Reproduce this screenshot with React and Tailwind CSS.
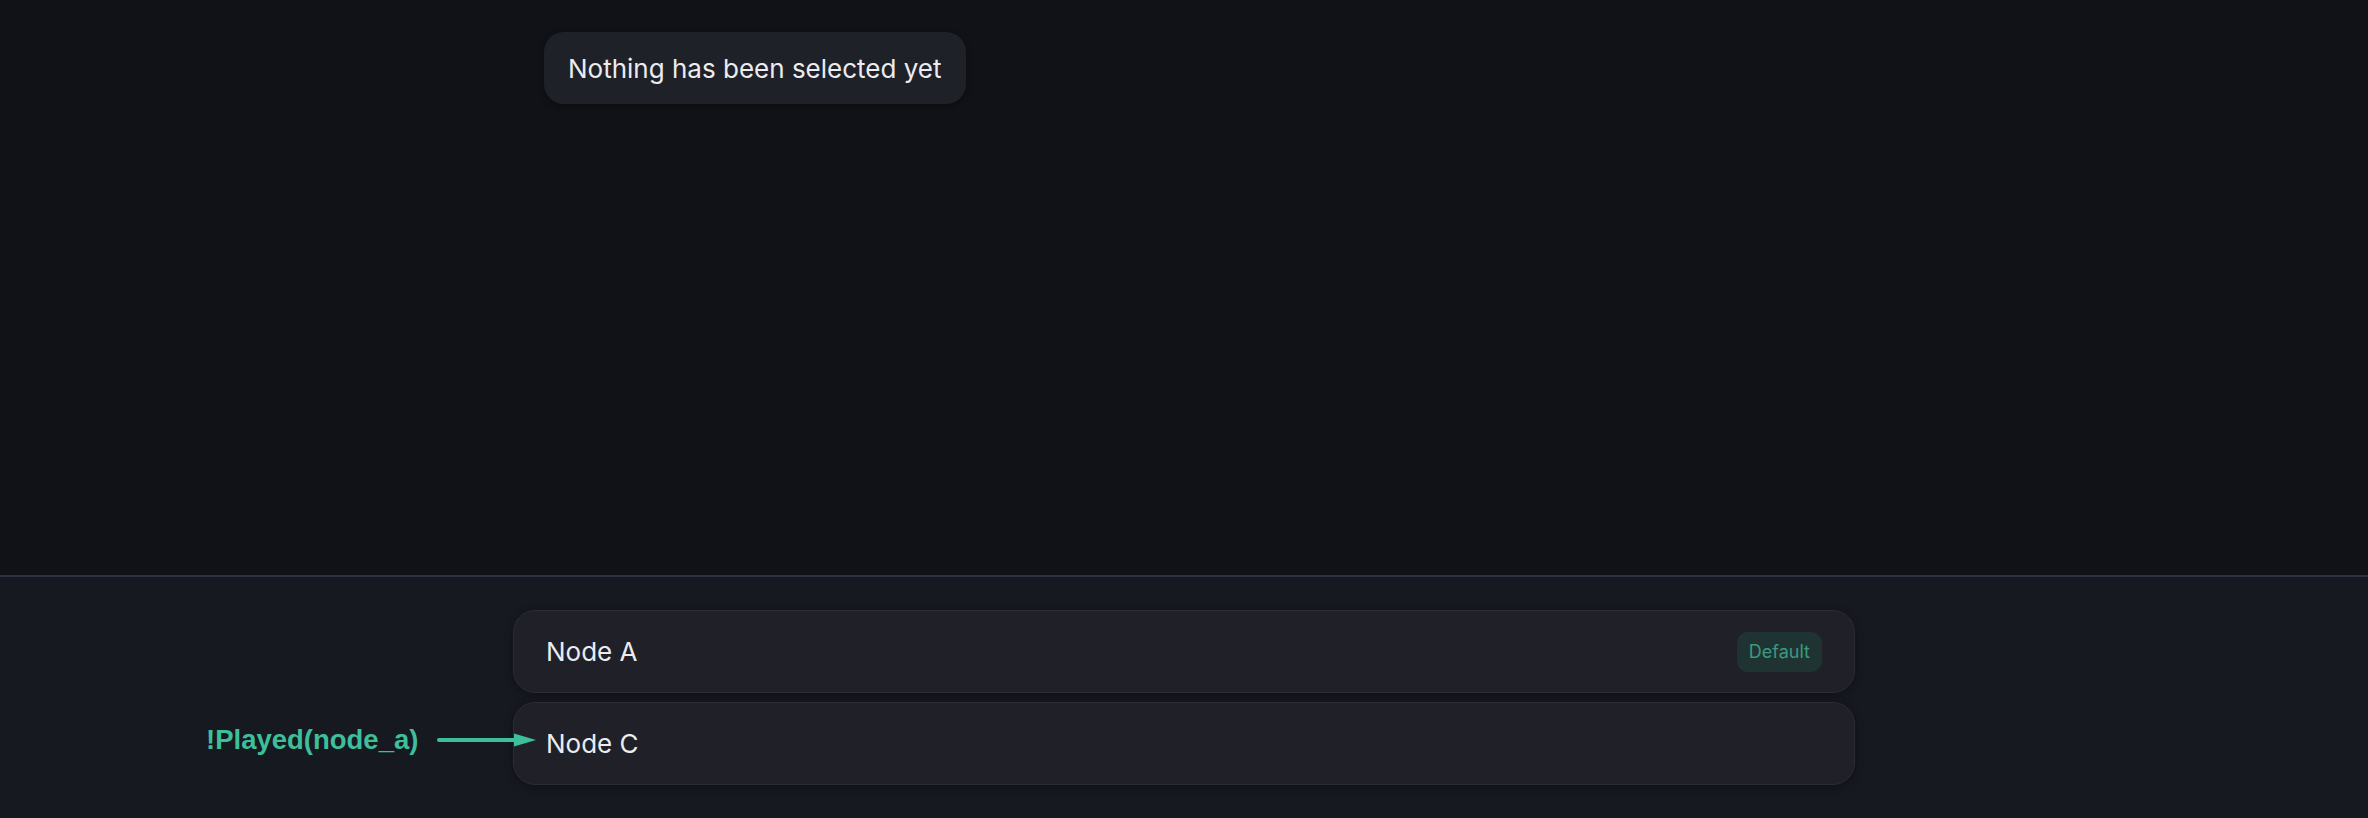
export default function App() {
  return (
    <div className="w-[2368px] h-[818px] flex flex-col bg-[#111217] overflow-hidden" style={{ fontFamily: "Inter, 'Noto Sans', sans-serif" }}>
      <div className="h-[575px] shrink-0 pt-[32px] pl-[544px]">
        <div className="inline-flex items-center h-[72px] px-[24px] rounded-[20px] bg-[#1f2129] text-[#ebebf0] text-[26px] shadow-[0_2px_6px_rgba(0,0,0,0.35)]">
          Nothing has been selected yet
        </div>
      </div>
      <div className="flex-1 border-t-2 border-[#2f3040] bg-[#171920] pt-[33px]">
        <div className="w-[1342px] mx-auto flex flex-col gap-[9px]">
          <div className="h-[83px] flex items-center justify-between px-[32px] rounded-[22px] bg-[#1f2028] border border-[#2a2c36] shadow-[0_2px_8px_rgba(0,0,0,0.35)]">
            <span className="text-[26px] text-[#ebebf0]">Node A</span>
            <span className="h-[40px] px-[12px] flex items-center rounded-[11px] bg-[#1f3432] text-[18px] text-[#3b9a81]">Default</span>
          </div>
          <div className="relative h-[83px] flex items-center px-[32px] rounded-[22px] bg-[#1f2028] border border-[#2a2c36] shadow-[0_2px_8px_rgba(0,0,0,0.35)]">
            <div className="absolute left-[-308px] top-[23px] flex items-center">
              <span className="text-[27.5px] font-bold text-[#3ebf9b] leading-none" style={{ fontFamily: "'Liberation Sans', Arial, sans-serif" }}>!Played(node_a)</span>
              <svg width="100" height="16" viewBox="0 0 100 16" className="ml-[19px]">
                <line x1="2" y1="8" x2="80" y2="8" stroke="#3ebf9b" strokeWidth="4" strokeLinecap="round" />
                <polygon points="77,1.5 99,8 77,14.5" fill="#3ebf9b" />
              </svg>
            </div>
            <span className="text-[26px] text-[#ebebf0]">Node C</span>
          </div>
        </div>
      </div>
    </div>
  );
}
